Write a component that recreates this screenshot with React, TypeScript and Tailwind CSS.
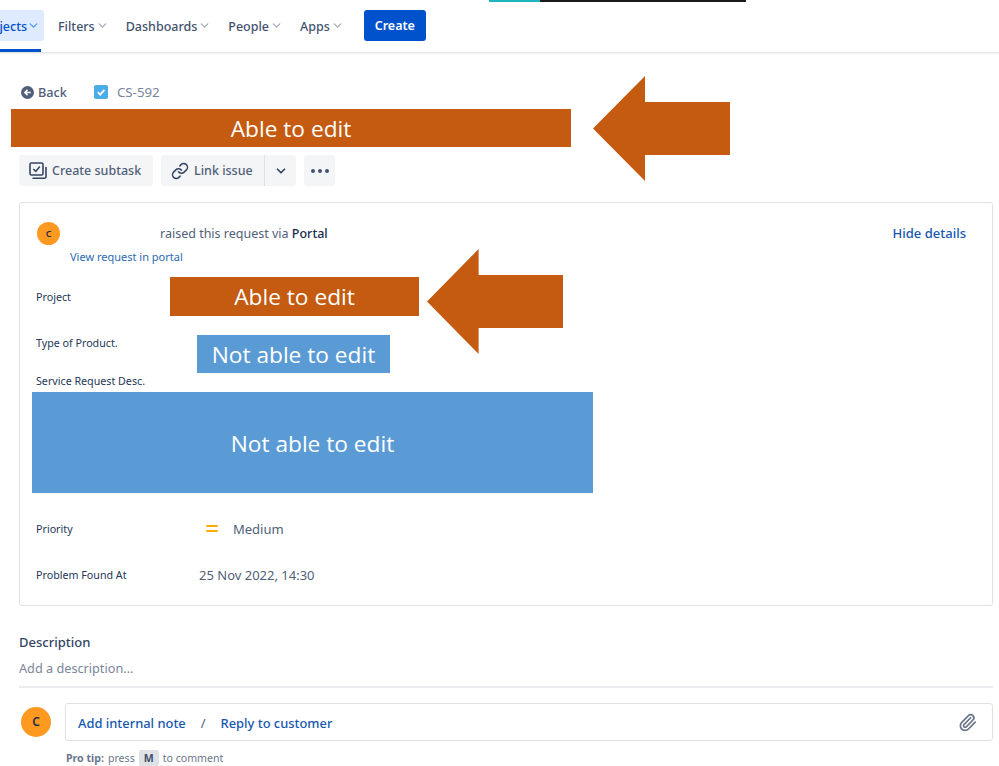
import React from 'react';
import { ChevronDown, Link, Paperclip } from 'lucide-react';

const NavItem = ({ label, className }: { label: string; className: string }) => (
  <div className={`flex items-center text-[12.5px] font-medium text-[#42526e] ${className}`}>
    <span className="pt-[3px]">{label}</span>
    <ChevronDown className="w-[13px] h-[13px] ml-[1px] text-[#a5adba]" strokeWidth={2.5} />
  </div>
);

const FieldRow = ({ label, className, children }: { label: string; className: string; children?: React.ReactNode }) => (
  <div className={`flex items-center ${className}`}>
    <div className="w-[163px] text-[10.7px] text-[#253858]">{label}</div>
    {children}
  </div>
);

const Arrow = ({ className }: { className: string }) => (
  <svg viewBox="0 0 137 105" preserveAspectRatio="none" className={`absolute ${className}`}>
    <polygon points="0,52.5 52,0 52,26 137,26 137,79 52,79 52,105" fill="#c55a11" />
  </svg>
);

const Annotation = ({ text, className }: { text: string; className: string }) => (
  <div className={`absolute flex items-center justify-center text-white text-[22.7px] font-['Open_Sans',sans-serif] ${className}`}>
    {text}
  </div>
);

export default function App() {
  return (
    <div className="relative w-[999px] h-[766px] overflow-hidden bg-white font-['Noto_Sans',sans-serif]">
      {/* Top strip left over from the crop */}
      <div className="absolute top-0 left-[489px] flex h-[2px]">
        <div className="w-[51px] bg-[#1fb5c0]" />
        <div className="w-[206px] bg-[#1a1a1a]" />
      </div>

      {/* Nav */}
      <div className="relative flex items-center h-[53px] pb-[1px] border-b border-[#e4e6ea] shadow-[0_1px_1px_rgba(9,30,66,0.06)]">
        <div className="flex items-center justify-end w-[44px] h-[31px] rounded-r-[3px] bg-[#deebff] text-[12.5px] font-medium text-[#0052cc] pr-[4px] overflow-hidden">
          <span className="whitespace-nowrap pt-[3px]">jects</span>
          <ChevronDown className="w-[13px] h-[13px] shrink-0 text-[#4c9aff]" strokeWidth={2.5} />
        </div>
        <div className="absolute left-0 bottom-0 w-[41px] h-[3px] bg-[#0052cc]" />
        <NavItem label="Filters" className="ml-[14px]" />
        <NavItem label="Dashboards" className="ml-[17px]" />
        <NavItem label="People" className="ml-[17px]" />
        <NavItem label="Apps" className="ml-[17px]" />
        <button className="ml-[20px] w-[62px] h-[31px] pt-[2px] rounded-[3px] bg-[#0052cc] text-white text-[12.5px] font-semibold">
          Create
        </button>
      </div>

      {/* Breadcrumbs */}
      <div className="flex items-center h-[16px] mt-[31px] ml-[21px] text-[12.7px]">
        <svg viewBox="0 0 14 14" className="w-[13px] h-[13px]">
          <circle cx="7" cy="7" r="7" fill="#505f79" />
          <path d="M10.5 7H4.5M7 4.2L4.2 7L7 9.8" fill="none" stroke="#fff" strokeWidth="1.7" />
        </svg>
        <span className="ml-[4px] pt-[1px] font-medium text-[#505f79]">Back</span>
        <svg viewBox="0 0 14 14" className="w-[14px] h-[14px] ml-[27px]">
          <rect width="14" height="14" rx="2" fill="#4bade8" />
          <path d="M3.8 7.2L6.2 9.6L10.4 4.8" fill="none" stroke="#fff" strokeWidth="1.8" />
        </svg>
        <span className="ml-[9px] pt-[1px] text-[13.3px] text-[#7a869a]">CS-592</span>
      </div>

      {/* Actions */}
      <div className="flex mt-[55px] ml-[19px] h-[31px] text-[12.5px] font-medium text-[#505f79]">
        <button className="flex items-center w-[134px] pl-[10px] rounded-[3px] bg-[#f4f5f7]">
          <svg viewBox="0 0 18 18" className="w-[18px] h-[18px] text-[#344563]" fill="none" stroke="currentColor" strokeWidth="1.6">
            <rect x="1" y="1" width="13" height="12" rx="1.5" />
            <path d="M4.3 7L6.8 9.4L10.8 4.6" />
            <path d="M3.5 16.2H15.5A1.5 1.5 0 0 0 17 14.7V5" />
          </svg>
          <span className="ml-[5px] pt-[2px]">Create subtask</span>
        </button>
        <button className="flex items-center w-[103px] ml-[8px] pl-[10px] rounded-l-[3px] bg-[#f4f5f7]">
          <Link className="w-[18px] h-[18px] text-[#344563]" strokeWidth={2} />
          <span className="ml-[5px] pt-[2px]">Link issue</span>
        </button>
        <button className="flex items-center justify-center w-[32px] border-l border-[#dfe1e6] rounded-r-[3px] bg-[#f4f5f7]">
          <ChevronDown className="w-[14px] h-[14px] text-[#344563]" strokeWidth={3} />
        </button>
        <button className="flex items-center justify-center gap-[3px] w-[31px] ml-[8px] rounded-[3px] bg-[#f4f5f7]">
          <span className="w-[4px] h-[4px] rounded-full bg-[#42526e]" />
          <span className="w-[4px] h-[4px] rounded-full bg-[#42526e]" />
          <span className="w-[4px] h-[4px] rounded-full bg-[#42526e]" />
        </button>
      </div>

      {/* Request details card */}
      <div className="h-[404px] mt-[16px] mx-[6px] ml-[19px] pl-[16px] pr-[26px] rounded-[3px] border border-[#dfe1e6]">
        <div className="flex items-center h-[23px] mt-[19px]">
          <div className="flex items-center justify-center w-[23px] h-[23px] ml-[1px] rounded-full bg-[#ff991f] text-[9px] font-semibold text-[#172b4d]">
            C
          </div>
          <div className="ml-[100px] pt-[2px] text-[12.5px] text-[#505f79]">
            raised this request via <span className="font-medium text-[#172b4d]">Portal</span>
          </div>
          <div className="ml-auto text-[13px] font-medium text-[#1557b0]">Hide details</div>
        </div>
        <div className="mt-[4px] ml-[34px] text-[11px] leading-[16px] text-[#2a6ab5]">View request in portal</div>
        <FieldRow label="Project" className="h-[16px] mt-[24px]" />
        <FieldRow label="Type of Product." className="h-[16px] mt-[30px]" />
        <FieldRow label="Service Request Desc." className="h-[16px] mt-[22px]" />
        <FieldRow label="Priority" className="h-[20px] mt-[130px]">
          <div className="flex flex-col gap-[3px] ml-[7px] w-[12px] -mt-[1px]">
            <span className="h-[2px] rounded bg-[#ffab00]" />
            <span className="h-[2px] rounded bg-[#ffab00]" />
          </div>
          <span className="ml-[15px] pt-[1px] text-[13px] text-[#505f79]">Medium</span>
        </FieldRow>
        <FieldRow label="Problem Found At" className="h-[20px] mt-[26px]">
          <span className="pt-[1px] text-[13px] text-[#505f79]">25 Nov 2022, 14:30</span>
        </FieldRow>
      </div>

      {/* Description */}
      <div className="mt-[27px] ml-[19px] mr-[6px]">
        <div className="text-[13px] leading-[18px] font-medium text-[#344563]">Description</div>
        <div className="mt-[8px] pb-[8px] text-[12.7px] leading-[19px] text-[#7a869a] border-b-2 border-[#ebecf0]">
          Add a description...
        </div>
      </div>

      {/* Comment box */}
      <div className="flex mt-[15px] ml-[21px] mr-[6px]">
        <div className="flex items-center justify-center w-[30px] h-[30px] mt-[4px] rounded-full bg-[#ff991f] text-[12px] font-semibold text-[#172b4d]">
          C
        </div>
        <div className="flex-1 ml-[14px]">
          <div className="flex items-center h-[38px] pl-[12px] pr-[15px] rounded-[3px] border border-[#dfe1e6] text-[12.9px] font-medium text-[#1557b0]">
            <span className="pt-[3px]">Add internal note</span>
            <span className="ml-[15px] pt-[3px] text-[#505f79] font-normal">/</span>
            <span className="ml-[15px] pt-[3px]">Reply to customer</span>
            <Paperclip className="ml-auto w-[19px] h-[19px] text-[#6b778c]" strokeWidth={2.2} />
          </div>
          <div className="flex items-center mt-[9px] ml-[1px] text-[10.6px] leading-[16px] text-[#6b778c]">
            <span className="font-bold">Pro tip:</span>
            <span className="ml-[4px]">press</span>
            <span className="mx-[4px] px-[5px] rounded-[2px] bg-[#dfe1e6] font-bold text-[#42526e]">M</span>
            <span>to comment</span>
          </div>
        </div>
      </div>

      {/* Annotations pasted over the screenshot */}
      <Annotation text="Able to edit" className="left-[11px] top-[109px] w-[560px] h-[38px] pt-[2px] bg-[#c55a11]" />
      <Arrow className="left-[593px] top-[76px] w-[137px] h-[105px]" />
      <Annotation text="Able to edit" className="left-[170px] top-[277px] w-[249px] h-[39px] pt-[2px] bg-[#c55a11]" />
      <Arrow className="left-[427px] top-[249px] w-[136px] h-[105px]" />
      <Annotation text="Not able to edit" className="left-[197px] top-[335px] w-[193px] h-[38px] pt-[2px] bg-[#5b9bd5]" />
      <Annotation text="Not able to edit" className="left-[32px] top-[392px] w-[561px] h-[101px] pt-[3px] bg-[#5b9bd5]" />
    </div>
  );
}
